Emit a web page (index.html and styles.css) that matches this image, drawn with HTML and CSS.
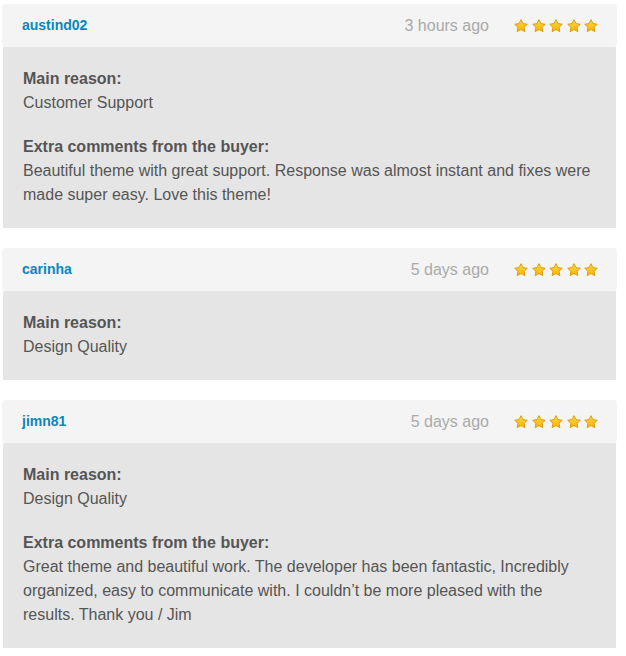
FILE: index.html
```html
<!DOCTYPE html>
<html lang="en">
<head>
  <title>Reviews</title>
  <link rel="stylesheet" href="styles.css">
</head>
<body>

  <svg width="0" height="0" class="defs">
    <defs>
      <linearGradient id="gold" x1="0" y1="0" x2="0" y2="1">
        <stop offset="0" stop-color="#ffd84a"/>
        <stop offset="1" stop-color="#f7b500"/>
      </linearGradient>
      <symbol id="star" viewBox="0 0 24 24">
        <path d="M12 1.2l3.3 6.7 7.4 1.1-5.4 5.2 1.3 7.4L12 18.1l-6.6 3.5 1.3-7.4-5.4-5.2 7.4-1.1z" fill="url(#gold)" stroke="#d99a00" stroke-width="1.6" stroke-linejoin="round"/>
      </symbol>
    </defs>
  </svg>

  <div class="reviews">

    <div class="review">
      <div class="review-head">
        <a class="user" href="#">austind02</a>
        <span class="time">3 hours ago</span>
        <span class="stars">
          <svg><use href="#star"/></svg><svg><use href="#star"/></svg><svg><use href="#star"/></svg><svg><use href="#star"/></svg><svg><use href="#star"/></svg>
        </span>
      </div>
      <div class="review-body">
        <p><strong>Main reason:</strong><br>Customer Support</p>
        <p><strong>Extra comments from the buyer:</strong><br>Beautiful theme with great support. Response was almost instant and fixes were made super easy. Love this theme!</p>
      </div>
    </div>

    <div class="review">
      <div class="review-head">
        <a class="user" href="#">carinha</a>
        <span class="time">5 days ago</span>
        <span class="stars">
          <svg><use href="#star"/></svg><svg><use href="#star"/></svg><svg><use href="#star"/></svg><svg><use href="#star"/></svg><svg><use href="#star"/></svg>
        </span>
      </div>
      <div class="review-body">
        <p><strong>Main reason:</strong><br>Design Quality</p>
      </div>
    </div>

    <div class="review">
      <div class="review-head">
        <a class="user" href="#">jimn81</a>
        <span class="time">5 days ago</span>
        <span class="stars">
          <svg><use href="#star"/></svg><svg><use href="#star"/></svg><svg><use href="#star"/></svg><svg><use href="#star"/></svg><svg><use href="#star"/></svg>
        </span>
      </div>
      <div class="review-body">
        <p><strong>Main reason:</strong><br>Design Quality</p>
        <p><strong>Extra comments from the buyer:</strong><br>Great theme and beautiful work. The developer has been fantastic, Incredibly organized, easy to communicate with. I couldn&rsquo;t be more pleased with the results. Thank you / Jim</p>
      </div>
    </div>

  </div>

</body>
</html>
```

FILE: styles.css
```css
body {
  font-family: "Liberation Sans", Arial, sans-serif;
  margin: 0;
  padding: 0;
  background-color: white;
  color: #555;
}

.defs {
  position: absolute;
}

.reviews {
  padding: 4px 9px 0 2px;
}

.review {
  margin-bottom: 20px;
}

.review-head {
  display: flex;
  align-items: center;
  height: 43px;
  padding: 0 19px 0 20px;
  background-color: #f4f4f4;
  border-radius: 4px;
}

.user {
  font-size: 14px;
  font-weight: bold;
  color: #0a87bd;
  text-decoration: none;
  margin-bottom: 2px;
}

.time {
  margin-left: auto;
  font-size: 16px;
  color: #aaa;
}

.stars {
  display: flex;
  gap: 3.5px;
  margin-left: 25px;
}

.stars svg {
  width: 14px;
  height: 14px;
}

.review-body {
  margin: 0 1px;
  padding: 20px 20px 21px;
  background-color: #e5e5e5;
  font-size: 16px;
  line-height: 24px;
}

.review-body p {
  margin: 0 0 20px;
}

.review-body p:last-child {
  margin-bottom: 0;
}

.review-body strong {
  color: #555;
}
```
